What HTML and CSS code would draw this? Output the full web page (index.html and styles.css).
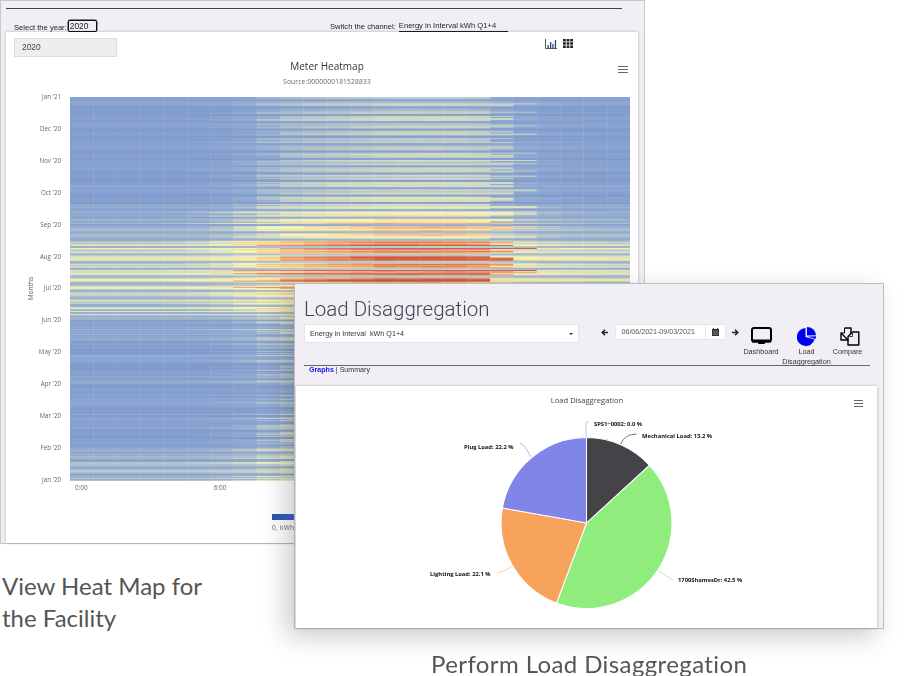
FILE: index.html
```html
<!DOCTYPE html>
<html lang="en">
<head>
<meta charset="utf-8">
<title>Meter Heatmap and Load Disaggregation</title>
<link rel="stylesheet" href="styles.css">
</head>
<body>
<main class="stage">
  <section class="left-col">
    <div class="shot">
      <div class="shot-rule"></div>
      <div class="pickers">
        <div class="picker-year"><span>Select the year:</span><span class="year-box">2020</span></div>
        <div class="picker-channel"><span>Switch the channel:</span><span class="channel-value">Energy in Interval kWh Q1+4</span></div>
      </div>
      <div class="heat-card">
        <div class="heat-top">
          <div class="year-button">2020</div>
          <div class="view-icons">
            <svg width="12" height="10" viewBox="0 0 12 10"><path d="M.5 0v9.500H12" fill="none" stroke="#556" stroke-width="1"/><path d="M2.500 6h1.300v3H2.500zM5 3h1.300v6H5zM7.300 5h1.300v4H7.300zM9.800 1h1.300v8H9.800z" fill="#2a4a7a"/></svg>
            <svg width="10" height="9" viewBox="0 0 10 9"><path d="M0 0h2.800v2.500H0zM3.600 0h2.800v2.500H3.600zM7.200 0H10v2.500H7.200zM0 3.250h2.800v2.500H0zM3.600 3.250h2.800v2.500H3.600zM7.200 3.250H10v2.500H7.200zM0 6.500h2.800V9H0zM3.600 6.500h2.800V9H3.600zM7.200 6.500H10V9H7.200z" fill="#222"/></svg>
          </div>
        </div>
        <div class="heat-titles">
          <h2 class="heat-title">Meter Heatmap</h2>
          <p class="heat-source">Source:0000000181528833</p>
          <svg class="menu-icon heat-menu" width="10" height="7" viewBox="0 0 10 7"><path d="M0 .5h10M0 3.500h10M0 6.500h10" stroke="#666" stroke-width="1.200"/></svg>
        </div>
        <div class="heat-plot">
          <div class="axis-title"><span>Months</span></div>
          <div class="y-labels">
            <span>Jan '21</span><span>Dec '20</span><span>Nov '20</span><span>Oct '20</span><span>Sep '20</span><span>Aug '20</span><span>Jul '20</span><span>Jun '20</span><span>May '20</span><span>Apr '20</span><span>Mar '20</span><span>Feb '20</span><span>Jan '20</span>
          </div>
          <div class="plot-col">
            <canvas id="heat" class="heat-canvas" width="560" height="384"></canvas>
            <div class="x-labels"><span>0:00</span><span>6:00</span></div>
            <div class="legend"><div class="legend-bar"></div><span>0, kWh</span></div>
          </div>
        </div>
      </div>
    </div>
    <p class="caption-left">View Heat Map for<br>the Facility</p>
  </section>

  <section class="floating">
    <div class="window">
      <div class="win-head">
        <div class="win-main">
          <h1 class="win-title">Load Disaggregation</h1>
          <div class="select"><span>Energy in Interval&nbsp; kWh Q1+4</span><i class="caret"></i></div>
        </div>
        <div class="date-nav">
          <svg width="7" height="7" viewBox="0 0 7 7"><path d="M7 3.500H1.500M4 .8L1.200 3.500 4 6.200" fill="none" stroke="#222" stroke-width="1.500"/></svg>
          <div class="date-field">
            <span class="date-text">06/06/2021-09/03/2021</span>
            <span class="date-btn"><svg width="7" height="8" viewBox="0 0 7 8"><path d="M0 1h7v7H0z" fill="#333"/><path d="M1.500 0v2M5.500 0v2" stroke="#333"/><path d="M1 3.200h5M1 4.800h5M1 6.400h5" stroke="#aaa" stroke-width=".5"/></svg></span>
          </div>
          <svg width="7" height="7" viewBox="0 0 7 7"><path d="M0 3.500h5.500M3 .8l2.800 2.700L3 6.200" fill="none" stroke="#222" stroke-width="1.500"/></svg>
        </div>
        <nav class="app-nav">
          <a class="app-link link-dash">
            <svg width="21" height="19" viewBox="0 0 21 19"><rect x="1" y="1" width="19" height="13.500" rx="2" fill="none" stroke="#000" stroke-width="2"/><path d="M1 12.500h19v3H1zM7.500 15h6l.5 2H7z" fill="#000"/></svg>
            <span>Dashboard</span>
          </a>
          <a class="app-link link-load">
            <svg width="19" height="19" viewBox="0 0 19 19"><path d="M8.500 1a9 9 0 1 0 9 11.500L8.500 10z" fill="#0000f0"/><path d="M10 0a9 9 0 0 1 9 8.200L10 8.500z" fill="#0000f0"/><path d="M10.500 9.700l8.500-.4a9 9 0 0 1-.6 2.700z" fill="#0000f0"/></svg>
            <span>Load Disaggregation</span>
          </a>
          <a class="app-link link-compare">
            <svg width="20" height="19" viewBox="0 0 20 19"><path d="M4.500 1H11v6M8 13H1V6z" fill="none" stroke="#000" stroke-width="1.400" stroke-linejoin="round"/><path d="M4.500 1v5H1" fill="none" stroke="#000" stroke-width="1"/><path d="M12.500 5H18.800V18H8V9.500z" fill="none" stroke="#000" stroke-width="1.400" stroke-linejoin="round"/><path d="M12.500 5v4.500H8" fill="none" stroke="#0a4a70" stroke-width="1"/></svg>
            <span>Compare</span>
          </a>
        </nav>
      </div>
      <div class="tabs"><a class="tab-active">Graphs</a> | Summary</div>
      <div class="pie-card">
        <svg class="pie-svg" width="581" height="242" viewBox="0 0 581 242">
          <text class="pie-title" x="291" y="17" text-anchor="middle">Load Disaggregation</text>
          <path d="M558 14.500h9M558 17.500h9M558 20.500h9" stroke="#666" stroke-width="1.200"/>
          <g stroke="#fff" stroke-width="1" transform="translate(290.500 137) scale(1.005) translate(-290.500 -136)">
            <path d="M290.500 136V51A85 85 0 0 1 353.200 78.600z" fill="#434348"/>
            <path d="M290.500 136L353.200 78.600A85 85 0 0 1 260.700 215.600z" fill="#90ed7d"/>
            <path d="M290.500 136L260.700 215.600A85 85 0 0 1 206.800 121.100z" fill="#f7a35c"/>
            <path d="M290.500 136L206.800 121.100A85 85 0 0 1 290.500 51z" fill="#8085e9"/>
          </g>
          <g fill="none" stroke-width="1">
            <path d="M290 52V37q0-1 3-1" stroke="#a8cdf0"/>
            <path d="M324.700 58q4-10 16-10" stroke="#777"/>
            <path d="M224 57q5 2 11 14" stroke="#b3b6f0"/>
            <path d="M201 187q8-1 15-7" stroke="#fbcfa8"/>
            <path d="M362 185q4 2 15 9" stroke="#bdf3b0"/>
          </g>
          <g class="pie-labels">
            <text x="298" y="40">SPS1−0002: 0.0 %</text>
            <text x="346" y="52">Mechanical Load: 13.2 %</text>
            <text x="168" y="63">Plug Load: 22.2 %</text>
            <text x="134" y="190">Lighting Load: 22.1 %</text>
            <text x="382" y="196">1700ShamesDr: 42.5 %</text>
          </g>
        </svg>
      </div>
    </div>
    <p class="caption-right">Perform Load Disaggregation</p>
  </section>
</main>
<script src="heat.js"></script>
</body>
</html>
```
FILE: styles.css
```css
* { box-sizing: border-box; }
html, body { margin: 0; height: 100%; background: #fff; overflow: hidden; }
body { font-family: "Liberation Sans", Arial, sans-serif; color: #333; }
h1, h2, p { margin: 0; font-weight: normal; }

.stage { position: relative; width: 916px; height: 676px; }
.left-col { width: 645px; }

.shot {
  height: 544px;
  background: #f1eff5;
  border: 1px solid #c9c9c9;
  padding-top: 7px;
  display: flex;
  flex-direction: column;
  filter: blur(.35px);
  will-change: transform;
}
.shot-rule { height: 1px; margin: 0 22px 0 5px; background: #444; flex: none; }
.pickers {
  height: 23px;
  flex: none;
  display: flex;
  align-items: flex-end;
  padding: 0 0 0 13px;
  font-size: 7.600px;
  color: #222;
}
.picker-year { width: 316px; display: flex; gap: 1px; align-items: flex-end; }
.picker-channel { display: flex; gap: 3px; align-items: flex-end; }
.year-box {
  width: 29px;
  height: 12px;
  border: 1px solid #111;
  border-radius: 2px;
  line-height: 10px;
  padding-left: 1px;
  font-size: 8.400px;
  box-shadow: 0 0 0 .4px #111;
}
.picker-channel span:first-child { padding-bottom: 1px; }
.channel-value { width: 109px; padding-bottom: 1px; border-bottom: 1px solid #222; white-space: nowrap; }

.heat-card {
  flex: 1;
  margin: 0 6px 0 5px;
  background: #fff;
  box-shadow: 0 0 3px rgba(0,0,0,.25);
  display: flex;
  flex-direction: column;
  overflow: hidden;
}
.heat-top { display: flex; justify-content: space-between; padding: 6px 65px 0 8px; height: 25px; flex: none; }
.year-button {
  width: 103px;
  height: 19px;
  background: #eee;
  border: 1px solid #ddd;
  font-size: 8.400px;
  line-height: 17px;
  padding-left: 7px;
  color: #444;
}
.view-icons { display: flex; gap: 6px; align-items: flex-start; padding-top: 1px; }
.heat-titles { position: relative; height: 40px; flex: none; text-align: center; }
.heat-title { font: 10px/18px "Open Sans", sans-serif; color: #333; padding-left: 10px; }
.heat-source { font: 6.600px/12px "Open Sans", sans-serif; color: #666; letter-spacing: .2px; padding: 1px 0 0 10px; }
.heat-menu { position: absolute; right: 10px; top: 9px; }

.heat-plot { flex: 1; display: flex; align-items: flex-start; }
.axis-title { width: 48px; height: 384px; flex: none; display: flex; align-items: center; padding-left: 20px; }
.axis-title span { writing-mode: vertical-rl; transform: rotate(180deg); font: 6.500px "Open Sans", sans-serif; color: #555; }
.y-labels {
  width: 7px;
  height: 391px;
  margin-top: -4px;
  flex: none;
  display: flex;
  flex-direction: column;
  justify-content: space-between;
  align-items: flex-end;
  font: 6.200px/8px "Open Sans", sans-serif;
  color: #666;
  white-space: nowrap;
}
.plot-col { width: 560px; margin-left: 9px; flex: none; }
.heat-canvas { display: block; width: 560px; height: 384px; }
.x-labels {
  display: flex;
  gap: 126px;
  padding: 3px 0 0 5px;
  font: 6.400px/8px "Open Sans", sans-serif;
  color: #666;
}
.legend { margin: 22px 0 0 202px; font: 6.500px/8px "Open Sans", sans-serif; color: #666; letter-spacing: .3px; }
.legend-bar { width: 200px; height: 6px; background: linear-gradient(90deg, #2a54b8, #9fb2d8 60%, #eee); margin-bottom: 4px; }

.caption-left, .caption-right {
  font-family: "Lato", sans-serif;
  font-weight: 400;
  font-size: 24px;
  line-height: 32px;
  color: #555;
}
.caption-left { padding: 26px 0 0 2px; }

.floating { position: absolute; left: 294px; top: 283px; width: 590px; }
.window {
  height: 346px;
  background: #f1eff5;
  border: 1px solid #bdbdbd;
  box-shadow: -8px 8px 24px rgba(0,0,0,.2);
  display: flex;
  flex-direction: column;
  will-change: transform;
}
.win-head { height: 82px; flex: none; display: flex; border-bottom: 1px solid #666; margin: 0 13px 0 9px; }
.win-main { width: 275px; padding-top: 11px; flex: none; }
.win-title { font: 300 20.500px/28px "Roboto", sans-serif; color: #3f4450; white-space: nowrap; margin-bottom: 1px; }
.select {
  height: 19px;
  background: #fff;
  border: 1px solid #e6e4ea;
  border-radius: 2px;
  font-size: 7.200px;
  line-height: 17px;
  padding: 0 5px;
  color: #333;
  display: flex;
  justify-content: space-between;
  align-items: center;
}
.caret { width: 0; height: 0; border: 2px solid transparent; border-top: 2px solid #222; border-bottom: 0; }
.date-nav { display: flex; align-items: center; gap: 6.500px; height: 16px; margin: 40px 0 0 22px; flex: none; }
.date-field { display: flex; width: 111px; height: 16px; background: #fff; border: 1px solid #e6e4ea; border-radius: 2px; }
.date-text { flex: 1; font-size: 7.100px; line-height: 14px; padding-left: 6px; color: #555; white-space: nowrap; }
.date-btn { width: 20px; border-left: 1px solid #e6e4ea; display: flex; align-items: center; justify-content: center; }
.app-nav { display: flex; margin-left: 2.500px; padding-top: 43px; align-items: flex-start; }
.app-link { display: flex; flex-direction: column; align-items: center; font-size: 7.200px; line-height: 9.500px; color: #333; text-align: center; }
.app-link svg { margin-bottom: 1px; }
.link-dash { width: 39px; }
.link-load { width: 50px; margin-left: 1px; }
.link-load span { display: block; width: 50px; }
.link-compare { width: 36px; margin-left: -2px; }
.link-compare svg { margin-left: 5px; }
.tabs { height: 20px; flex: none; padding: 0 0 0 14px; font-size: 7.100px; line-height: 9px; color: #333; }
.tab-active { color: #1414f0; font-weight: bold; }
.pie-card { width: 581px; height: 242px; margin-left: 1px; background: #fff; box-shadow: 0 0 3px rgba(0,0,0,.25); flex: none; }
.pie-svg { display: block; }
.pie-title { font: 7.600px "Open Sans", sans-serif; fill: #444; }
.pie-labels text { font: bold 5.800px "Open Sans", sans-serif; fill: #111; }
.caption-right { padding: 19px 0 0 137px; white-space: nowrap; letter-spacing: .4px; }
```
FILE: heat.js
```js
(function () {
  var canvas = document.getElementById('heat');
  var ctx = canvas.getContext('2d');
  var W = 560, H = 384, DAYS = 366, HOURS = 24;
  var seed = 20200;
  function rnd() { seed = (seed * 16807) % 2147483647; return seed / 2147483647; }

  // Keypoints: canvas y, off-peak level, peak level
  var season = [
    [0, .05, .29], [70, .05, .31], [95, .06, .36], [112, .08, .46], [118, .14, .74],
    [143, .2, .82], [146, .34, .95], [180, .34, .96], [195, .32, .8], [218, .28, .6],
    [224, .08, .45], [250, .05, .33], [310, .05, .33], [350, .05, .42], [352, .17, .5],
    [384, .18, .5]
  ];
  var hourShape = [0, 0, 0, 0, 0, .04, .12, .3, .64, .72, .8, .86, .93, 1, 1, 1, 1, .98, .9, .22, .12, .08, .05, .03];
  var stops = [
    [0, [122, 151, 207]], [.15, [150, 174, 208]], [.3, [205, 214, 196]], [.42, [228, 230, 188]],
    [.56, [252, 245, 178]], [.7, [246, 208, 150]], [.85, [232, 150, 106]], [1, [208, 88, 70]]
  ];
  function lerp(a, b, t) { return a + (b - a) * t; }
  function seasonAt(y) {
    for (var i = 1; i < season.length; i++) {
      if (y <= season[i][0]) {
        var p = season[i - 1], q = season[i], t = (y - p[0]) / (q[0] - p[0]);
        return [lerp(p[1], q[1], t), lerp(p[2], q[2], t)];
      }
    }
    return season[season.length - 1].slice(1);
  }
  function color(v) {
    v = Math.max(0, Math.min(1, v));
    for (var i = 1; i < stops.length; i++) {
      if (v <= stops[i][0]) {
        var p = stops[i - 1], q = stops[i], t = (v - p[0]) / (q[0] - p[0]);
        return 'rgb(' + Math.round(lerp(p[1][0], q[1][0], t)) + ',' +
          Math.round(lerp(p[1][1], q[1][1], t)) + ',' + Math.round(lerp(p[1][2], q[1][2], t)) + ')';
      }
    }
    return 'rgb(208,88,70)';
  }
  function shapeAt(i) { return hourShape[Math.max(0, Math.min(HOURS - 1, i))]; }
  var rowH = H / DAYS, colW = W / HOURS;
  var drift = 0;
  for (var d = 0; d < DAYS; d++) {
    var y = d * rowH;
    var s = seasonAt(y);
    var wk = d % 7;
    var weekend = wk === 2 || wk === 3;
    var hotBand = y > 146 && y < 192;
    drift = drift * .7 + (rnd() - .5) * .22;
    var dayFactor = weekend ? .15 : .86 + drift + rnd() * .14;
    if (!weekend && rnd() < .16) dayFactor *= .6;
    if (hotBand && !weekend) dayFactor = Math.max(dayFactor, .82);
    var offFactor = weekend ? .5 : .5 + rnd() * 1.1;
    if (y > 224 && y < 350 && rnd() < .15) offFactor += 1.6;
    var startShift = Math.floor(rnd() * 3) - 1;
    var endShift = rnd() < .15 ? 1 : Math.floor(rnd() * 2) - 1;
    if (y > 224) startShift += 1;
    if (y < 110) startShift = Math.max(0, startShift);
    for (var h = 0; h < HOURS; h++) {
      var shape = h < 13 ? shapeAt(h - startShift) : shapeAt(h - endShift);
      var cell = .95 + rnd() * .1;
      var v = s[0] * offFactor + (s[1] - s[0]) * shape * dayFactor * cell;
      ctx.fillStyle = color(v);
      ctx.fillRect(h * colW, y, colW + .5, rowH + .5);
    }
  }
  ctx.fillStyle = 'rgba(255,255,255,.07)';
  for (var c = 1; c < HOURS; c++) ctx.fillRect(Math.round(c * colW), 0, 1, H);
})();
```
